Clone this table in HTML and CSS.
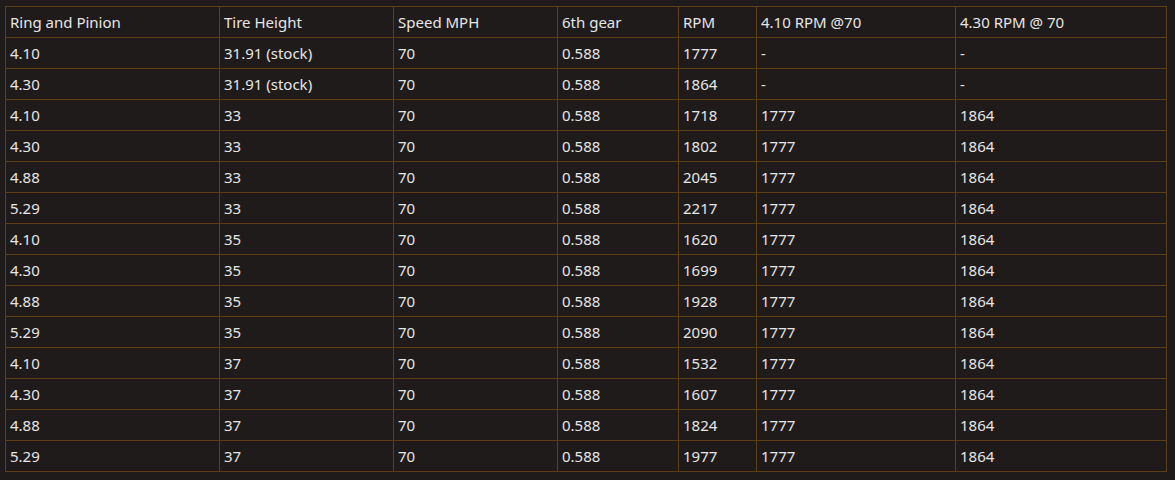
FILE: index.html
```html
<!DOCTYPE html>
<html lang="en">
<head>
    <meta charset="UTF-8">
    <title>Ring and Pinion RPM</title>
    <link rel="stylesheet" href="styles.css">
</head>
<body>
    <table class="gear-table">
        <colgroup>
            <col class="c1"><col class="c2"><col class="c3"><col class="c4"><col class="c5"><col class="c6"><col class="c7">
        </colgroup>
        <thead>
            <tr><th>Ring and Pinion</th><th>Tire Height</th><th>Speed MPH</th><th>6th gear</th><th>RPM</th><th>4.10 RPM @70</th><th>4.30 RPM @ 70</th></tr>
        </thead>
        <tbody>
            <tr><td>4.10</td><td>31.91 (stock)</td><td>70</td><td>0.588</td><td>1777</td><td>-</td><td>-</td></tr>
            <tr><td>4.30</td><td>31.91 (stock)</td><td>70</td><td>0.588</td><td>1864</td><td>-</td><td>-</td></tr>
            <tr><td>4.10</td><td>33</td><td>70</td><td>0.588</td><td>1718</td><td>1777</td><td>1864</td></tr>
            <tr><td>4.30</td><td>33</td><td>70</td><td>0.588</td><td>1802</td><td>1777</td><td>1864</td></tr>
            <tr><td>4.88</td><td>33</td><td>70</td><td>0.588</td><td>2045</td><td>1777</td><td>1864</td></tr>
            <tr><td>5.29</td><td>33</td><td>70</td><td>0.588</td><td>2217</td><td>1777</td><td>1864</td></tr>
            <tr><td>4.10</td><td>35</td><td>70</td><td>0.588</td><td>1620</td><td>1777</td><td>1864</td></tr>
            <tr><td>4.30</td><td>35</td><td>70</td><td>0.588</td><td>1699</td><td>1777</td><td>1864</td></tr>
            <tr><td>4.88</td><td>35</td><td>70</td><td>0.588</td><td>1928</td><td>1777</td><td>1864</td></tr>
            <tr><td>5.29</td><td>35</td><td>70</td><td>0.588</td><td>2090</td><td>1777</td><td>1864</td></tr>
            <tr><td>4.10</td><td>37</td><td>70</td><td>0.588</td><td>1532</td><td>1777</td><td>1864</td></tr>
            <tr><td>4.30</td><td>37</td><td>70</td><td>0.588</td><td>1607</td><td>1777</td><td>1864</td></tr>
            <tr><td>4.88</td><td>37</td><td>70</td><td>0.588</td><td>1824</td><td>1777</td><td>1864</td></tr>
            <tr><td>5.29</td><td>37</td><td>70</td><td>0.588</td><td>1977</td><td>1777</td><td>1864</td></tr>
        </tbody>
    </table>
</body>
</html>
```

FILE: styles.css
```css
body {
    margin: 0;
    padding: 6px 5px;
    background-color: #1f1b1a;
    color: #e6e6e6;
    font-family: "Noto Sans", "Open Sans", sans-serif;
    font-size: 15px;
}
.gear-table {
    border-collapse: collapse;
    table-layout: fixed;
    width: 1161px;
    border: 1px solid #5c3f14;
}
.gear-table th, .gear-table td {
    border: 1px solid #5c3f14;
    height: 31px;
    padding: 0 4px;
    text-align: left;
    font-weight: normal;
    white-space: nowrap;
    box-sizing: border-box;
}
.c1 { width: 214px; }
.c2 { width: 174px; }
.c3 { width: 164px; }
.c4 { width: 121px; }
.c5 { width: 78px; }
.c6 { width: 199px; }
.c7 { width: 211px; }
```
